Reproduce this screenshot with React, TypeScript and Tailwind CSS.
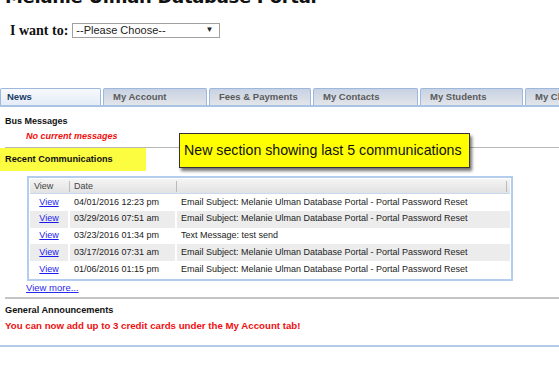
import React from "react";

const tabs = [
  { label: "News", w: "w-[101px]", active: true },
  { label: "My Account", w: "w-[104px]" },
  { label: "Fees & Payments", w: "w-[102px]" },
  { label: "My Contacts", w: "w-[105px]" },
  { label: "My Students", w: "w-[103px]" },
  { label: "My Classes", w: "w-[60px]" },
];

const rows = [
  { date: "04/01/2016 12:23 pm", text: "Email Subject: Melanie Ulman Database Portal - Portal Password Reset" },
  { date: "03/29/2016 07:51 am", text: "Email Subject: Melanie Ulman Database Portal - Portal Password Reset" },
  { date: "03/23/2016 01:34 pm", text: "Text Message: test send" },
  { date: "03/17/2016 07:31 am", text: "Email Subject: Melanie Ulman Database Portal - Portal Password Reset" },
  { date: "01/06/2016 01:15 pm", text: "Email Subject: Melanie Ulman Database Portal - Portal Password Reset" },
];

export default function App() {
  return (
    <div className="relative w-[559px] h-[367px] overflow-hidden bg-white font-['Liberation_Sans',Arial,sans-serif]">
      {/* Title, cut off by the top edge */}
      <div className="-mt-[12px] pl-[5px] h-[18px] text-[18px] leading-[18px] font-bold text-[#111] font-['DejaVu_Sans',sans-serif] tracking-[-0.3px] whitespace-nowrap">
        Melanie Ulman Database Portal
      </div>

      {/* I want to */}
      <div className="flex items-center gap-[4px] pl-[10px] mt-[16px] h-[16px]">
        <span className="font-['Liberation_Serif',serif] font-bold text-[14px] text-[#111]">I want to:</span>
        <div className="flex items-center justify-between w-[148px] h-[15px] border border-[#a0a0a0] bg-white pl-[3px] pr-[6px] text-[11px] text-[#222]">
          <span>--Please Choose--</span>
          <span className="text-[8px]">▼</span>
        </div>
      </div>

      {/* Tabs */}
      <div className="flex items-end gap-[2px] mt-[51px] h-[18px] border-b-2 border-[#a9c3e4]">
        {tabs.map((t) => (
          <div
            key={t.label}
            className={`${t.w} shrink-0 h-[17px] flex items-center text-[9.5px] font-bold whitespace-nowrap overflow-hidden rounded-t-[2px] border border-b-0 border-[#9db8dc] ${
              t.active
                ? "bg-gradient-to-b from-[#f7f9fc] to-[#e4ecf7] text-[#1c3c66] pl-[6px]"
                : "bg-gradient-to-b from-[#c7d2e3] to-[#e3e5e9] text-[#5a5a5a] pl-[9px]"
            }`}
          >
            {t.label}
          </div>
        ))}
      </div>

      {/* Bus messages */}
      <div className="pl-[5px] mt-[8px] text-[9px] font-bold text-[#111] leading-[12px]">Bus Messages</div>
      <div className="pl-[26px] mt-[3px] text-[9px] font-bold italic text-[#f01010] leading-[12px]">No current messages</div>
      <div className="ml-[5px] mt-[5px] border-t border-[#b8b8b8]" />

      {/* Recent communications */}
      <div className="w-[146px] h-[23px] bg-[#fcfc40] flex items-center pl-[5px] text-[9.2px] font-bold text-[#111]">
        Recent Communications
      </div>

      <div className="ml-[27px] mt-[5px] w-[486px] border-2 border-[#b3cdee] p-[1px] text-[9px] text-[#222]">
        <div className="flex h-[15px] items-center bg-gradient-to-b from-[#f4f4f4] to-[#e2e2e2] border-b border-[#c8d8ee] text-[#444]">
          <div className="w-[40px] pl-[4px] border-r border-[#bbb] h-[11px] leading-[11px]">View</div>
          <div className="w-[107px] pl-[4px] border-r border-[#bbb] h-[11px] leading-[11px]">Date</div>
          <div className="flex-1 h-[11px] border-r border-[#bbb] mr-[3px]" />
        </div>
        {rows.map((r, i) => (
          <div key={i} className={`flex h-[16.8px] items-center ${i % 2 ? "bg-[#ececec]" : "bg-white"}`}>
            <div className="w-[40px] h-full flex items-center justify-center border-r-2 border-white">
              <span className="text-[#1a1aee] underline">View</span>
            </div>
            <div className="w-[107px] h-full flex items-center pl-[4px] border-r-2 border-white">{r.date}</div>
            <div className="flex-1 h-full flex items-center pl-[4px] whitespace-nowrap">{r.text}</div>
          </div>
        ))}
      </div>

      <div className="pl-[26px] mt-[1px] text-[9.5px] leading-[12px] text-[#2a2aee] underline">View more...</div>
      <div className="ml-[5px] mt-[3px] border-t-2 border-[#c4c4c4]" />

      {/* General announcements */}
      <div className="pl-[5px] mt-[5px] text-[9.2px] font-bold text-[#111] leading-[12px]">General Announcements</div>
      <div className="pl-[5px] mt-[4px] text-[9.7px] font-bold text-[#f01010] leading-[12px]">
        You can now add up to 3 credit cards under the My Account tab!
      </div>
      <div className="mt-[13px] border-t-2 border-[#b3cbe8]" />

      {/* Annotation callout */}
      <div className="absolute left-[179px] top-[133px] w-[291px] h-[35px] bg-[#ffff00] border border-[#333] shadow-[2px_3px_3px_rgba(0,0,0,0.55)] flex items-center pl-[4px] text-[14.2px] text-[#111] whitespace-nowrap">
        New section showing last 5 communications
      </div>
    </div>
  );
}
